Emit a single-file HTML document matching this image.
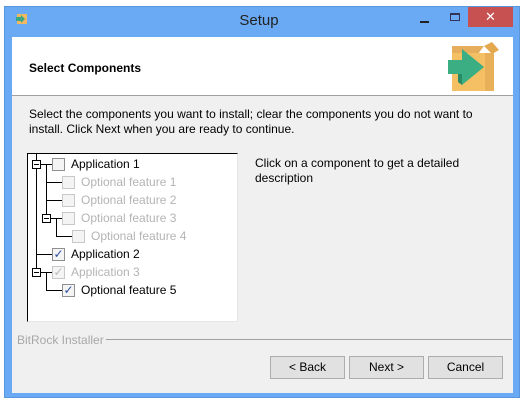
<!DOCTYPE html><html><head><style>
*{margin:0;padding:0;box-sizing:border-box}
body{width:528px;height:403px;background:#fff;position:relative;overflow:hidden;font-family:"Liberation Sans",sans-serif;font-size:12px;color:#000}
.a{position:absolute}
.frame{left:4px;top:6px;width:516px;height:392px;background:#6aaaf4;border:1px solid #5a96dc}
.btn{position:absolute;top:356px;width:75px;height:23px;background:#e1e1e1;border:1px solid #adadad;text-align:center;line-height:21px;font-size:12px}
.t{position:absolute;font-size:12px;white-space:nowrap}
.g{color:#b4b4b4}
.cb{position:absolute;width:13px;height:13px;border:1px solid #8f8f8f;background:#f4f4f4}
.cb.d{border-color:#c8c8c8;background:#f4f4f4}
.hl{position:absolute;height:1px;background:#000}
.vl{position:absolute;width:1px;background:#000}
.ex{position:absolute;width:9px;height:9px;border:1px solid #000;background:#fff}
.ex:after{content:"";position:absolute;left:1px;top:3px;width:5px;height:1px;background:#000}
</style></head><body>
<div class="a frame"></div>
<svg class="a" style="left:15px;top:13px" width="13" height="12"><rect x="2" y="1" width="10" height="10" fill="#f0b860"/><path d="M1 4h5V2l4 4-4 4V8H1z" fill="#3aa884"/></svg>
<div class="a" style="left:0;width:518px;top:12px;text-align:center;font-size:15px;color:#222">Setup</div>
<div class="a" style="left:420px;top:21px;width:9px;height:2px;background:#222"></div>
<div class="a" style="left:450px;top:13px;width:10px;height:8px;border:1px solid #335;border-top-width:2px"></div>
<div class="a" style="left:468px;top:7px;width:45px;height:20px;background:#c75050;color:#fff;text-align:center;font-size:13px;line-height:19px">✕</div>
<div class="a" style="left:12px;top:37px;width:501px;height:356px;background:#f0f0f0"></div>
<div class="a" style="left:12px;top:37px;width:501px;height:59px;background:#fff;border-bottom:1px solid #a0a0a0"></div>
<div class="a" style="left:29px;top:61px;font-weight:bold;font-size:12px">Select Components</div>
<svg class="a" style="left:444px;top:38px" width="58" height="56"><path d="M8 8h32l-6 8H8z" fill="#e6ae5c"/><path d="M40 8l8-4 7 8-7 4z" fill="#e4a94f"/><rect x="8" y="15" width="33" height="38" fill="#f5c063"/><path d="M41 15h9v38h-9z" fill="#e8b058"/><path d="M4 22h14v-11l22 18-22 18V36H4z" fill="#3cae84"/><path d="M4 36h14v11l-4-3V36" fill="#2a8a66"/></svg>
<div class="t" style="left:29px;top:107px">Select the components you want to install; clear the components you do not want to</div>
<div class="t" style="left:29px;top:122px">install. Click Next when you are ready to continue.</div>
<div class="a" style="left:27px;top:153px;width:211px;height:169px;background:#fff;border-top:1px solid #000;border-left:1px solid #000;border-right:1px solid #e6e6e6;border-bottom:1px solid #e6e6e6"></div>
<div class="vl" style="left:36px;top:154px;height:118px"></div>
<div class="vl" style="left:46px;top:164px;height:54px"></div>
<div class="vl" style="left:56px;top:218px;height:18px"></div>
<div class="vl" style="left:46px;top:272px;height:18px"></div>
<div class="hl" style="left:36px;top:164px;width:16px"></div>
<div class="hl" style="left:46px;top:182px;width:16px"></div>
<div class="hl" style="left:46px;top:200px;width:16px"></div>
<div class="hl" style="left:46px;top:218px;width:16px"></div>
<div class="hl" style="left:56px;top:236px;width:16px"></div>
<div class="hl" style="left:36px;top:254px;width:16px"></div>
<div class="hl" style="left:36px;top:272px;width:16px"></div>
<div class="hl" style="left:46px;top:290px;width:16px"></div>
<div class="ex" style="left:32px;top:160px"></div>
<div class="ex" style="left:42px;top:214px"></div>
<div class="ex" style="left:32px;top:268px"></div>
<div class="cb" style="left:52px;top:158px"></div><div class="t" style="left:71px;top:157px">Application 1</div>
<div class="cb d" style="left:62px;top:176px"></div><div class="t g" style="left:81px;top:175px">Optional feature 1</div>
<div class="cb d" style="left:62px;top:194px"></div><div class="t g" style="left:81px;top:193px">Optional feature 2</div>
<div class="cb d" style="left:62px;top:212px"></div><div class="t g" style="left:81px;top:211px">Optional feature 3</div>
<div class="cb d" style="left:72px;top:230px"></div><div class="t g" style="left:91px;top:229px">Optional feature 4</div>
<div class="cb" style="left:52px;top:248px;color:#2a4ca0;font-size:12px;line-height:11px;text-align:center">✓</div><div class="t" style="left:71px;top:247px">Application 2</div>
<div class="cb d" style="left:52px;top:266px;color:#bbb;font-size:12px;line-height:11px;text-align:center">✓</div><div class="t g" style="left:71px;top:265px">Application 3</div>
<div class="cb" style="left:62px;top:284px;color:#2a4ca0;font-size:12px;line-height:11px;text-align:center">✓</div><div class="t" style="left:81px;top:283px">Optional feature 5</div>
<div class="t" style="left:255px;top:156px">Click on a component to get a detailed</div>
<div class="t" style="left:255px;top:171px">description</div>
<div class="t" style="left:17px;top:333px;color:#a8a8a8">BitRock Installer</div>
<div class="a" style="left:106px;top:339px;width:406px;height:1px;background:#a0a0a0"></div>
<div class="btn" style="left:270px">&lt; Back</div>
<div class="btn" style="left:349px">Next &gt;</div>
<div class="btn" style="left:428px">Cancel</div>
</body></html>
